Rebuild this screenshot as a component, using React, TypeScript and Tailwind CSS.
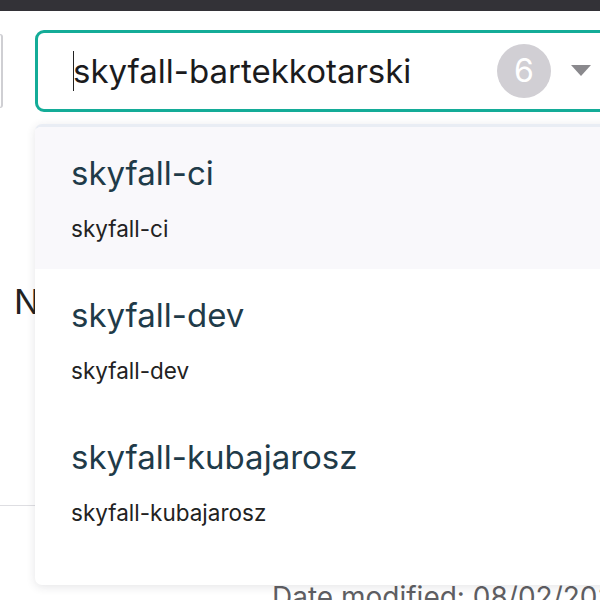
const projects = [
  { title: "skyfall-ci", id: "skyfall-ci" },
  { title: "skyfall-dev", id: "skyfall-dev" },
  { title: "skyfall-kubajarosz", id: "skyfall-kubajarosz" },
];

const App = () => {
  return (
    <div className="relative w-[600px] h-[600px] overflow-hidden bg-white font-['Inter',sans-serif]">
      <div className="h-[11px] bg-[#333237]" />

      <div className="flex items-center mt-[19px] h-[82px]">
        <div className="w-[3px] h-[74px] border-r-2 border-y border-[#cfcfd3] rounded-r-[3px] shrink-0" />
        <div className="ml-[32px] flex items-center w-[580px] h-[82px] shrink-0 border-[3px] border-[#14ac98] rounded-[9px] pl-[35px] pr-[17px]">
          <span className="flex-1 flex items-center text-[33px] leading-[40px] text-[#1b1b1d]">
            <span className="w-px h-[40px] bg-[#222] -mr-px" />
            skyfall-bartekkotarski
          </span>
          <span className="w-[54px] h-[54px] rounded-full bg-[#d1cfd4] text-white text-[32px] flex items-center justify-center">
            6
          </span>
          <svg width="20" height="12" viewBox="0 0 20 12" className="ml-[20px] mr-[4px]">
            <polygon points="0,0 20,0 10,11" fill="#8a898d" />
          </svg>
        </div>
      </div>

      <div className="pl-[14px] pt-[170px]">
        <p className="text-[34px] leading-[40px] text-[#222]">Name</p>
      </div>
      <div className="mt-[183px] h-px bg-[#dedee2]" />
      <p className="pl-[272px] mt-[74px] text-[28px] leading-[34px] text-[#5f5f63] whitespace-nowrap">
        Date modified: 08/02/2021
      </p>

      <div className="absolute left-[35px] top-[124px] w-[600px] bg-white rounded-[7px] border-t-[3px] border-[#e9edf4] shadow-[0_2px_10px_rgba(40,40,60,0.12)] pb-[32px] overflow-hidden">
        {projects.map((p, i) => (
          <div
            key={p.id}
            className={`h-[142px] pl-[36px] pt-[26px] ${i === 0 ? "bg-[#f9f8fb]" : "bg-white"}`}
          >
            <p className="text-[33px] leading-[40px] text-[#1f3b49]">{p.title}</p>
            <p className="mt-[22px] text-[22.5px] leading-[28px] text-[#222]">{p.id}</p>
          </div>
        ))}
      </div>
    </div>
  );
};

export default App;
